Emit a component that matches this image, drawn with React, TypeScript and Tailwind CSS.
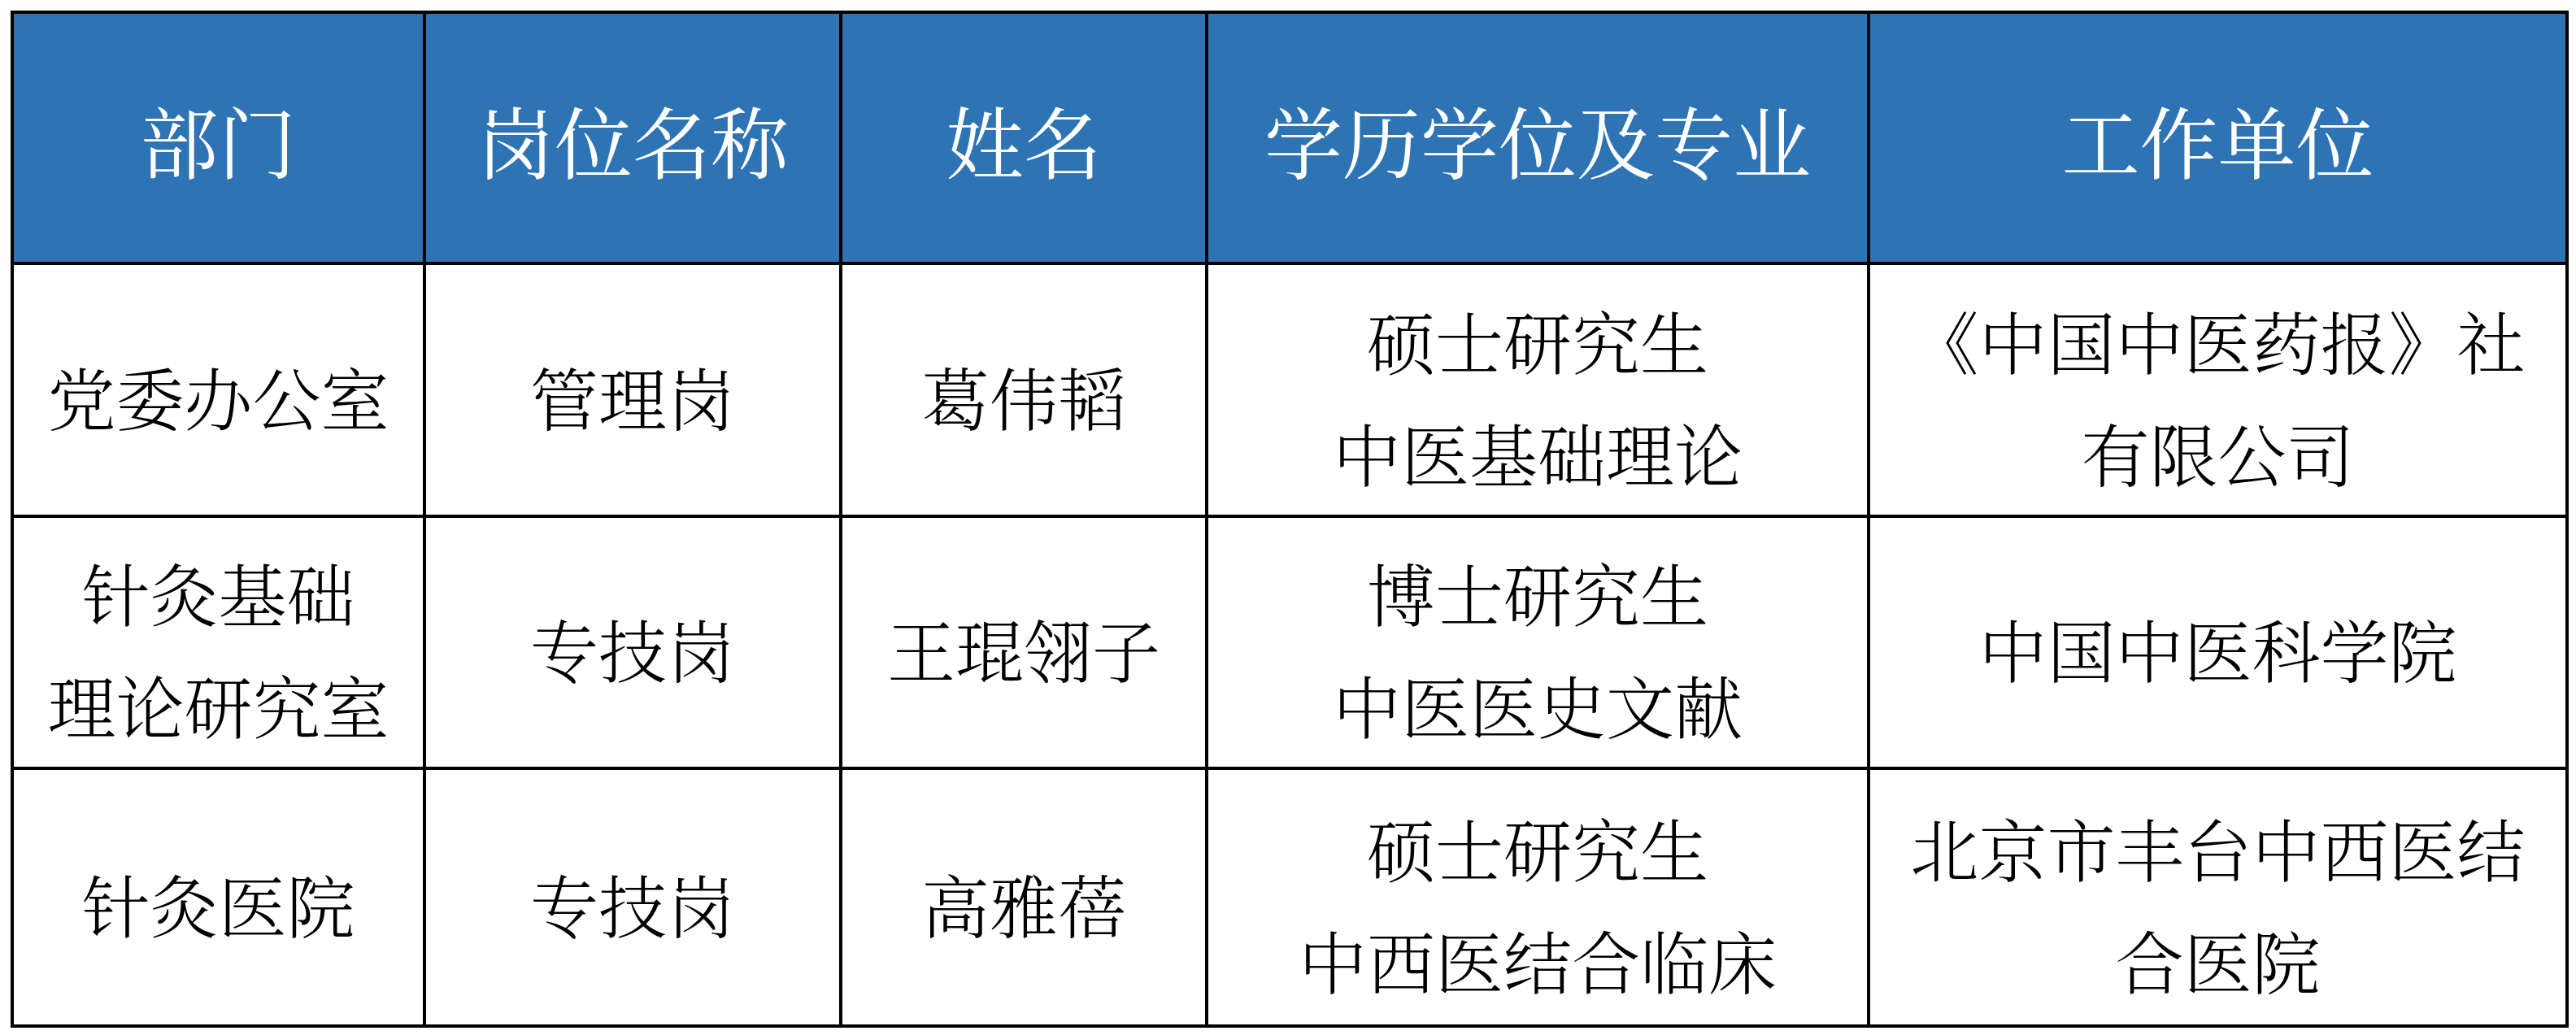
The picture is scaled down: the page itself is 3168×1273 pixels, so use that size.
const headers = ["部门", "岗位名称", "姓名", "学历学位及专业", "工作单位"];

const rows: string[][][] = [
  [["党委办公室"], ["管理岗"], ["葛伟韬"], ["硕士研究生", "中医基础理论"], ["《中国中医药报》社", "有限公司"]],
  [["针灸基础", "理论研究室"], ["专技岗"], ["王琨翎子"], ["博士研究生", "中医医史文献"], ["中国中医科学院"]],
  [["针灸医院"], ["专技岗"], ["高雅蓓"], ["硕士研究生", "中西医结合临床"], ["北京市丰台中西医结", "合医院"]],
];

const font = { fontFamily: '"Noto Serif CJK SC", "Noto Sans CJK SC", serif' };

export default function App() {
  return (
    <div className="w-[3168px] h-[1273px] bg-white pl-[13px] pt-[13px]" style={font}>
      <div className="inline-grid grid-cols-[503px_508px_446px_810px_855px] grid-rows-[305px_307px_306px_313px] gap-[4px] p-[4px] bg-black">
        {headers.map((h) => (
          <div
            key={h}
            className="bg-[#2E74B5] flex items-center justify-center pt-[2px] text-white text-[96px] font-normal leading-none"
          >
            {h}
          </div>
        ))}
        {rows.map((row, ri) =>
          row.map((cell, ci) => (
            <div
              key={`${ri}-${ci}`}
              className="bg-white flex flex-col items-center justify-center pt-[14px] text-black text-[84px] font-light leading-[138px] text-center"
            >
              {cell.map((line) => (
                <span key={line} className="whitespace-nowrap">
                  {line}
                </span>
              ))}
            </div>
          ))
        )}
      </div>
    </div>
  );
}
